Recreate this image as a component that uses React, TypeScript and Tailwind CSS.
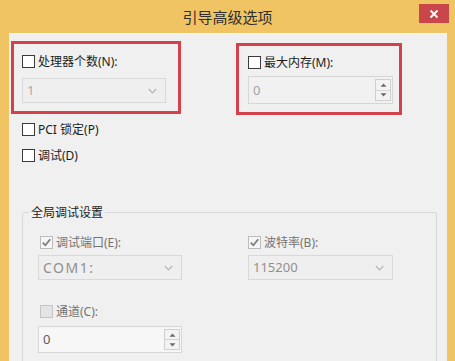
import React from "react";

function Check({
  checked = false,
  disabled = false,
  fill = false,
}: {
  checked?: boolean;
  disabled?: boolean;
  fill?: boolean;
}) {
  const cls = disabled
    ? fill
      ? "border-[#c4c4c4] bg-[#e4e4e4]"
      : "border-[#bdbdbd] bg-[#f6f6f6]"
    : "border-[#3a3a3a] bg-white";
  return (
    <span className={`w-[13px] h-[13px] border flex items-center justify-center shrink-0 ${cls}`}>
      {checked && (
        <svg width="11" height="11" viewBox="0 0 11 11">
          <path d="M1.8 5.6 L4.3 8.3 L9.3 2.2" stroke="#7a7a7a" strokeWidth="1.7" fill="none" />
        </svg>
      )}
    </span>
  );
}

function CheckRow({
  label,
  checked,
  disabled,
  fill,
  className = "",
}: {
  label: string;
  checked?: boolean;
  disabled?: boolean;
  fill?: boolean;
  className?: string;
}) {
  return (
    <div className={`flex items-center h-[13px] gap-[3px] ${className}`}>
      <Check checked={checked} disabled={disabled} fill={fill} />
      <span className={`text-[12px] leading-[13px] whitespace-nowrap ${disabled ? "text-[#737373]" : "text-[#1c1c1c]"}`}>
        {label}
      </span>
    </div>
  );
}

function Select({ value, className = "", textCls = "text-[13px] text-[#8f8f8f]" }: { value: string; className?: string; textCls?: string }) {
  return (
    <div className={`h-[25px] border border-[#d9d9d9] bg-[#efefef] flex items-center justify-between pl-[4px] pr-[8px] ${className}`}>
      <span className={`leading-none ${textCls}`}>{value}</span>
      <svg width="9" height="6" viewBox="0 0 9 6">
        <path d="M0.8 1 L4.5 4.8 L8.2 1" stroke="#b4b4b4" strokeWidth="1.2" fill="none" />
      </svg>
    </div>
  );
}

function Spin({ value, className = "", bg = "bg-[#f1f1f1]", textCls = "text-[#9a9a9a]" }: { value: string; className?: string; bg?: string; textCls?: string }) {
  return (
    <div className={`border border-[#d6d6d6] ${bg} flex items-center justify-between pl-[4px] pr-[1px] ${className}`}>
      <span className={`text-[13px] leading-none ${textCls}`}>{value}</span>
      <div className="flex flex-col h-[calc(100%-4px)] w-[16px] border border-[#cfcfcf] bg-[#f3f3f3]">
        <div className="flex-1 flex items-center justify-center border-b border-[#d4d4d4]">
          <svg width="7" height="4" viewBox="0 0 7 4">
            <path d="M0.5 3.8 L3.5 0.5 L6.5 3.8 Z" fill="#6a6a6a" />
          </svg>
        </div>
        <div className="flex-1 flex items-center justify-center">
          <svg width="7" height="4" viewBox="0 0 7 4">
            <path d="M0.5 0.2 L3.5 3.5 L6.5 0.2 Z" fill="#6a6a6a" />
          </svg>
        </div>
      </div>
    </div>
  );
}

export default function App() {
  return (
    <div className="w-[455px] h-[361px] bg-[#f1c463] flex flex-col overflow-hidden [font-family:'Noto_Sans','Noto_Sans_CJK_SC',sans-serif]">
      <div className="h-[33px] shrink-0 relative flex items-center justify-center">
        <span className="text-[15px] text-[#2e2e2e] leading-none mt-[1px]">引导高级选项</span>
        <div className="absolute left-[419px] top-[4px] w-[30px] h-[19px] bg-[#c9474b] flex items-center justify-center">
          <svg width="10" height="10" viewBox="0 0 10 10">
            <path d="M1.5 1.5 L8.5 8.5 M8.5 1.5 L1.5 8.5" stroke="#ffffff" strokeWidth="1.8" />
          </svg>
        </div>
      </div>
      <div className="flex-1 ml-[9px] mr-[8px] bg-[#f0f0f0] border-t border-[#f8f8fc]">
        <div className="flex items-start pt-[7px] pl-[2px]">
          <div className="w-[170px] h-[73px] border-[3px] border-[#d3414d] pl-[8px] pt-[11px]">
            <CheckRow label="处理器个数(N):" />
            <Select value="1" className="mt-[10px] w-[144px]" textCls="text-[13px] text-[#a9a9a9]" />
          </div>
          <div className="ml-[55px] mt-[2px] w-[166px] h-[72px] border-[3px] border-[#d3414d] pl-[9px] pt-[10px]">
            <CheckRow label="最大内存(M):" />
            <Spin value="0" className="mt-[7px] w-[145px] h-[28px]" textCls="text-[#a3a3a3]" />
          </div>
        </div>
        <CheckRow label="PCI 锁定(P)" className="ml-[13px] mt-[8px]" />
        <CheckRow label="调试(D)" className="ml-[13px] mt-[13px]" />
        <fieldset className="ml-[13px] mt-[42px] w-[415px] border border-[#d8d8d8] rounded-[2px] h-[200px]">
          <legend className="ml-[6px] px-[2px] text-[12px] leading-[17px] text-[#1c1c1c]">全局调试设置</legend>
          <div className="pl-[15px] pt-[15px] flex">
            <div className="w-[144px]">
              <CheckRow label="调试端口(E):" checked disabled className="ml-[2px]" />
              <Select value="COM1:" className="mt-[6px] w-[144px]" textCls="text-[14px] tracking-[1.5px] text-[#8f8f8f]" />
              <CheckRow label="通道(C):" disabled fill className="ml-[2px] mt-[25px]" />
              <Spin value="0" className="mt-[8px] w-[144px] h-[27px]" bg="bg-[#f7f7f7]" textCls="text-[#5c5c5c]" />
            </div>
            <div className="ml-[66px] w-[145px]">
              <CheckRow label="波特率(B):" checked disabled />
              <Select value="115200" className="mt-[6px] w-[145px]" />
            </div>
          </div>
        </fieldset>
      </div>
    </div>
  );
}
